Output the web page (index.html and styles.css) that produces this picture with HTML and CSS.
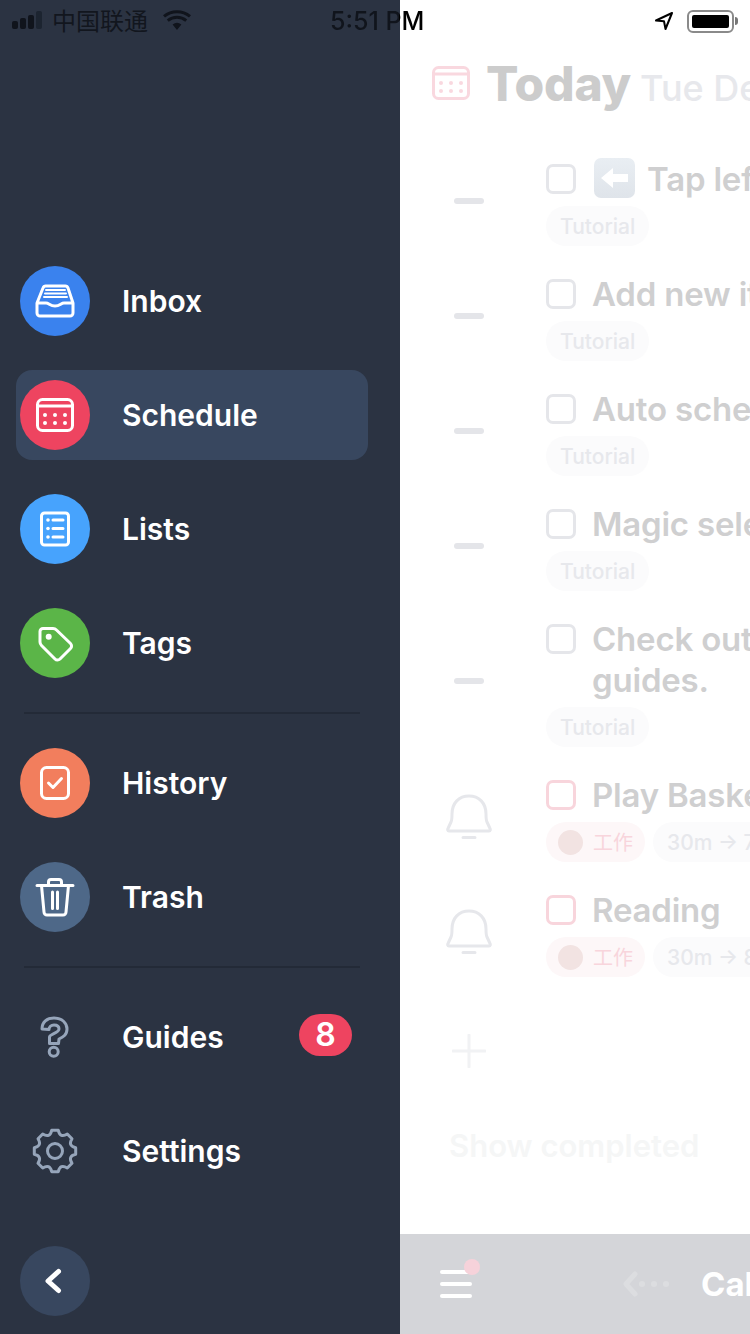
FILE: index.html
```html
<!DOCTYPE html>
<html>
<head>
<title>Schedule</title>
<meta charset="utf-8">
<link rel="stylesheet" href="styles.css">
</head>

<body>

    <div class="phone">

        <!-- status bar sits over both panels -->
        <div class="statusbar">
            <div class="signal"><i></i><i></i><i></i><i class="off"></i></div>
            <span class="carrier">中国联通</span>
            <svg class="wifi" width="28" height="20" viewBox="0 0 28 20"><path d="M14 20 9.6 14.6a7 7 0 0 1 8.8 0zM2 7.6 0 5.3a22 22 0 0 1 28 0L26 7.6a19 19 0 0 0-24 0zM5.700 11.700 3.800 9.500a16 16 0 0 1 20.400 0l-1.900 2.200a13 13 0 0 0-16.600 0z" fill="#10141c"/></svg>
            <span class="time">5:51 PM</span>
            <svg class="locate" width="20" height="20" viewBox="0 0 20 20"><path d="M18 2 2 9.500 10 10.300 11.500 18z" fill="none" stroke="#000" stroke-width="2" stroke-linejoin="round"/></svg>
            <div class="battery"><div class="charge"></div></div>
            <div class="nub"></div>
        </div>

        <div class="sidebar">
            <a class="item">
                <span class="circle blue">
                    <svg class="ico" viewBox="0 0 70 70"><path d="M17 37 23 22a3 3 0 0 1 3-2H45a3 3 0 0 1 3 2L53 37M17 37V47a3 3 0 0 0 3 3H50a3 3 0 0 0 3-3V37H44C41 37 40 40 35 40S29 37 26 37Z"/><path class="thin" d="M26 24H45M25 27.500H46M24 31H47"/></svg>
                </span>
                <span class="label">Inbox</span>
            </a>
            <a class="item active">
                <span class="circle red">
                    <svg class="ico" viewBox="0 0 70 70"><rect x="17.500" y="19.500" width="35" height="31" rx="5"/><path d="M17.500 26H52.500"/><g class="dots"><circle cx="25" cy="35" r="2"/><circle cx="35" cy="35" r="2"/><circle cx="45" cy="35" r="2"/><circle cx="25" cy="43" r="2"/><circle cx="35" cy="43" r="2"/><circle cx="45" cy="43" r="2"/></g></svg>
                </span>
                <span class="label">Schedule</span>
            </a>
            <a class="item">
                <span class="circle sky">
                    <svg class="ico" viewBox="0 0 70 70"><rect x="21.500" y="19" width="27" height="32" rx="3"/><path d="M33 26H43M33 34.500H43M33 43H43"/><g class="dots"><circle cx="28" cy="26" r="1.800"/><circle cx="28" cy="34.500" r="1.800"/><circle cx="28" cy="43" r="1.800"/></g></svg>
                </span>
                <span class="label">Lists</span>
            </a>
            <a class="item">
                <span class="circle green">
                    <svg class="ico" viewBox="0 0 70 70"><path d="M23 20.500H33A5 5 0 0 1 36.500 22L50.500 35.500A3.500 3.500 0 0 1 50.500 40.500L40 51A3.500 3.500 0 0 1 35 51L21.500 37.500A5 5 0 0 1 20 34V23.500A3 3 0 0 1 23 20.500Z"/><g class="dots"><circle cx="28.700" cy="28.700" r="3"/></g></svg>
                </span>
                <span class="label">Tags</span>
            </a>

            <div class="line"></div>

            <a class="item">
                <span class="circle orange">
                    <svg class="ico" viewBox="0 0 70 70"><rect x="21.500" y="19.500" width="27" height="31" rx="5"/><path d="M28.500 35 33 39.500 41.500 30.500"/></svg>
                </span>
                <span class="label">History</span>
            </a>
            <a class="item">
                <span class="circle slate">
                    <svg class="ico" viewBox="0 0 70 70"><path d="M17 23.500H53M21.500 23.500 24 50A3 3 0 0 0 27 53H43A3 3 0 0 0 46 50L48.500 23.500M28.500 23V20A2.500 2.500 0 0 1 31 17.500H39A2.500 2.500 0 0 1 41.500 20V23M32.500 30V46.500M37.500 30V46.500"/></svg>
                </span>
                <span class="label">Trash</span>
            </a>

            <div class="line"></div>

            <a class="item">
                <span class="circle">
                    <svg class="ico grey" viewBox="0 0 70 70"><path d="M22 27C22 20 27 16 34 16 42 16 47 21 47 27 47 33 43 35 39 37L38.500 41.500H29.500V35C30 32 39 31 39 27 39 24 37 23 34 23 31 23 29 25 29 27.500Z"/><circle cx="33.700" cy="49.700" r="4.500"/></svg>
                </span>
                <span class="label">Guides</span>
                <span class="badge">8</span>
            </a>
            <a class="item">
                <span class="circle">
                    <svg class="ico grey" viewBox="0 0 70 70"><path d="M31.700 14.300H38.300Q40.200 22.500 47.300 18L52 22.700Q47.500 29.800 55.700 31.700V38.300Q47.500 40.200 52 47.300L47.300 52Q40.200 47.500 38.300 55.700H31.700Q29.800 47.500 22.700 52L18 47.300Q22.500 40.200 14.300 38.300V31.700Q22.500 29.800 18 22.700L22.700 18Q29.800 22.500 31.700 14.300Z"/><circle cx="35" cy="35" r="7.500"/></svg>
                </span>
                <span class="label">Settings</span>
            </a>

            <div class="back">
                <svg width="70" height="70" viewBox="0 0 70 70"><path d="M38.500 25.500 28 35 38.500 44.500" fill="none" stroke="#fff" stroke-width="5" stroke-linecap="round" stroke-linejoin="round"/></svg>
            </div>
        </div>

        <div class="main">
            <div class="head">
                <svg class="headcal" width="38" height="34" viewBox="0 0 38 34"><rect x="1.500" y="1.500" width="35" height="31" rx="5"/><path d="M1.500 8H36.500"/><g><circle cx="9" cy="17" r="2"/><circle cx="19" cy="17" r="2"/><circle cx="29" cy="17" r="2"/><circle cx="9" cy="25" r="2"/><circle cx="19" cy="25" r="2"/><circle cx="29" cy="25" r="2"/></g></svg>
                <span class="today">Today</span>
                <span class="date">Tue Dec 11</span>
            </div>

            <div class="tasks">
                <div class="task">
                    <div class="side"><div class="dash"></div></div>
                    <div class="body">
                        <div class="title"><span class="check"></span><span class="arrowkey"><svg width="41" height="40" viewBox="0 0 41 40"><path d="M7 20 19 10V16H34V24H19V30Z" fill="#fff"/></svg></span>Tap left circle to schedule</div>
                        <div class="pills"><span class="pill">Tutorial</span></div>
                    </div>
                </div>
                <div class="task">
                    <div class="side"><div class="dash"></div></div>
                    <div class="body">
                        <div class="title"><span class="check"></span>Add new item here</div>
                        <div class="pills"><span class="pill">Tutorial</span></div>
                    </div>
                </div>
                <div class="task">
                    <div class="side"><div class="dash"></div></div>
                    <div class="body">
                        <div class="title"><span class="check"></span>Auto schedule</div>
                        <div class="pills"><span class="pill">Tutorial</span></div>
                    </div>
                </div>
                <div class="task">
                    <div class="side"><div class="dash"></div></div>
                    <div class="body">
                        <div class="title"><span class="check"></span>Magic select</div>
                        <div class="pills"><span class="pill">Tutorial</span></div>
                    </div>
                </div>
                <div class="task">
                    <div class="side"><div class="dash"></div></div>
                    <div class="body">
                        <div class="title"><span class="check"></span>Check out the<br>guides.</div>
                        <div class="pills"><span class="pill">Tutorial</span></div>
                    </div>
                </div>
                <div class="task">
                    <div class="side">
                        <svg class="bell" width="46" height="46" viewBox="0 0 46 46"><path d="M3 37H43C44.500 37 44.500 35.500 44 34.500L41 28C40 26 40 24 40 20 40 9 33 2 23 2S6 9 6 20C6 24 6 26 5 28L2 34.500C1.500 35.500 1.500 37 3 37ZM17 43.500H29"/></svg>
                    </div>
                    <div class="body">
                        <div class="title"><span class="check pink"></span>Play Basketball</div>
                        <div class="pills"><span class="pill work"><i class="swatch"></i><span class="worktext">工作</span></span><span class="pill">30m → 7:30 PM</span></div>
                    </div>
                </div>
                <div class="task">
                    <div class="side">
                        <svg class="bell" width="46" height="46" viewBox="0 0 46 46"><path d="M3 37H43C44.500 37 44.500 35.500 44 34.500L41 28C40 26 40 24 40 20 40 9 33 2 23 2S6 9 6 20C6 24 6 26 5 28L2 34.500C1.500 35.500 1.500 37 3 37ZM17 43.500H29"/></svg>
                    </div>
                    <div class="body">
                        <div class="title"><span class="check pink"></span>Reading</div>
                        <div class="pills"><span class="pill work"><i class="swatch"></i><span class="worktext">工作</span></span><span class="pill">30m → 8:30 PM</span></div>
                    </div>
                </div>
            </div>

            <div class="plus"><svg width="34" height="34" viewBox="0 0 34 34"><path d="M17 1V33M1 17H33" stroke="#f1f2f4" stroke-width="3" stroke-linecap="round"/></svg></div>
            <div class="completed">Show completed</div>

            <div class="bottombar">
                <div class="menu">
                    <i></i><i></i><i></i>
                    <span class="menudot"></span>
                </div>
                <div class="hint">
                    <svg width="48" height="26" viewBox="0 0 48 26"><path d="M12 3 3 13 12 23" fill="none" stroke="#dcdde0" stroke-width="5" stroke-linecap="round" stroke-linejoin="round"/><circle cx="19" cy="13" r="3" fill="#dcdde0"/><circle cx="31" cy="13" r="3" fill="#dcdde0"/><circle cx="43" cy="13" r="3" fill="#dcdde0"/></svg>
                </div>
                <span class="calendar">Calendar</span>
            </div>
        </div>
    </div>

</body>
</html>
```

FILE: styles.css
```css
html, body {
    margin: 0;
    padding: 0;
}

body {
    font-family: Inter, "Noto Sans CJK SC", sans-serif;
}

.phone {
    position: relative;
    display: flex;
    width: 750px;
    height: 1334px;
    overflow: hidden;
    background-color: white;
}

/* status bar */

.statusbar {
    position: absolute;
    top: 0;
    left: 0;
    right: 0;
    height: 42px;
    display: flex;
    align-items: center;
    padding-left: 12px;
}

.signal {
    flex: none;
    display: flex;
    align-items: flex-end;
    gap: 2px;
    width: 33px;
    height: 18px;
    margin-bottom: 2px;
}

.signal i {
    width: 6px;
    background-color: #10141c;
    border-radius: 2px;
}

.signal i:nth-child(1) { height: 8px; }
.signal i:nth-child(2) { height: 11px; }
.signal i:nth-child(3) { height: 14px; }
.signal i:nth-child(4) { height: 18px; }

.signal .off {
    background-color: #1c2430;
}

.carrier {
    flex: none;
    width: 96px;
    margin-left: 7px;
    margin-bottom: 4px;
    font-family: "Noto Sans CJK SC", sans-serif;
    font-size: 24px;
    color: #12161e;
}

.wifi {
    flex: none;
    margin-left: 15px;
    margin-bottom: 2px;
}

.time {
    flex: none;
    width: 96px;
    margin-left: 139px;
    font-size: 25px;
    font-weight: 500;
    background: linear-gradient(to right, #10141c 69px, #000 69px);
    -webkit-background-clip: text;
    background-clip: text;
    color: transparent;
}

.locate {
    flex: none;
    margin-left: 228px;
}

.battery {
    flex: none;
    box-sizing: border-box;
    width: 47px;
    height: 23px;
    margin-left: 13px;
    padding: 3px;
    border: 2px solid #8a8a8a;
    border-radius: 6px;
}

.charge {
    height: 100%;
    background-color: black;
    border-radius: 2px;
}

.nub {
    flex: none;
    width: 3px;
    height: 8px;
    margin-left: 1px;
    background-color: #777;
    border-radius: 0 3px 3px 0;
}

/* left menu */

.sidebar {
    box-sizing: border-box;
    flex: none;
    display: flex;
    flex-direction: column;
    gap: 24px;
    width: 400px;
    padding-top: 256px;
    padding-bottom: 18px;
    background-color: #2b3342;
}

.item {
    display: flex;
    align-items: center;
    gap: 32px;
    height: 90px;
    margin: 0 32px 0 16px;
    padding: 0 16px 0 4px;
    border-radius: 16px;
}

.item.active {
    background-color: #38475f;
}

.circle {
    flex: none;
    width: 70px;
    height: 70px;
    border-radius: 50%;
}

.blue { background-color: #3a82ee; }
.red { background-color: #ee4460; }
.sky { background-color: #47a3fd; }
.green { background-color: #5bb548; }
.orange { background-color: #f27e5d; }
.slate { background-color: #4e6888; }

.ico {
    display: block;
    width: 70px;
    height: 70px;
    fill: none;
    stroke: white;
    stroke-width: 3;
    stroke-linecap: round;
    stroke-linejoin: round;
}

.ico .thin {
    stroke-width: 2;
}

.ico .dots {
    fill: white;
    stroke: none;
}

.ico.grey {
    stroke: #96a5ba;
}

.label {
    flex: 1;
    font-size: 30px;
    font-weight: 600;
    color: white;
}

.badge {
    width: 53px;
    height: 42px;
    margin-bottom: 4px;
    border-radius: 21px;
    background-color: #ee4460;
    color: white;
    font-size: 32px;
    font-weight: 600;
    line-height: 42px;
    text-align: center;
}

.line {
    height: 2px;
    margin: 0 40px 0 24px;
    background-color: #232a37;
}

.back {
    width: 70px;
    height: 70px;
    margin-top: auto;
    margin-left: 20px;
    border-radius: 50%;
    background-color: #38475f;
}

/* right panel, faded */

.main {
    position: relative;
    flex: 1;
    min-width: 0;
    display: flex;
    flex-direction: column;
    overflow: hidden;
    white-space: nowrap;
}

.head {
    display: flex;
    align-items: baseline;
    height: 60px;
    margin-top: 54px;
    padding-left: 32px;
}

.headcal {
    flex: none;
    align-self: center;
    margin-right: 16px;
    margin-bottom: 2px;
    fill: none;
    stroke: #f9d8df;
    stroke-width: 3;
}

.headcal g {
    fill: #f9d8df;
    stroke: none;
}

.today {
    flex: none;
    font-size: 48px;
    font-weight: 800;
    letter-spacing: -0.2px;
    color: #cccccc;
}

.date {
    flex: none;
    margin-left: 9px;
    font-size: 36px;
    font-weight: 500;
    color: #e7e8ec;
}

.tasks {
    margin-top: 45px;
}

.task {
    display: flex;
    margin-bottom: 28px;
}

.side {
    flex: none;
    display: flex;
    align-items: center;
    justify-content: center;
    width: 138px;
    margin-right: 8px;
    padding-bottom: 4px;
}

.dash {
    width: 30px;
    height: 6px;
    border-radius: 3px;
    background-color: #e4e5e9;
}

.bell {
    fill: none;
    stroke: #e6e7eb;
    stroke-width: 3;
    stroke-linecap: round;
    stroke-linejoin: round;
}

.title {
    padding-left: 46px;
    position: relative;
    font-size: 33px;
    font-weight: 600;
    letter-spacing: -0.2px;
    line-height: 41px;
    color: #cfcfd0;
}

.check {
    position: absolute;
    left: 0;
    top: 5px;
    box-sizing: border-box;
    width: 30px;
    height: 30px;
    border: 3px solid #e5e6ea;
    border-radius: 7px;
}

.check.pink {
    border-color: #f8d5dc;
}

.arrowkey {
    display: inline-block;
    width: 41px;
    height: 40px;
    margin-top: -1px;
    margin-left: 2px;
    margin-right: 12px;
    vertical-align: top;
    border-radius: 7px;
    background: linear-gradient(#e9eef3, #dfe4ea);
}

.arrowkey svg {
    display: block;
}

.pills {
    display: flex;
    gap: 8px;
    margin-top: 6px;
}

.pill {
    flex: none;
    display: flex;
    align-items: center;
    height: 40px;
    padding: 0 14px;
    border-radius: 20px;
    background-color: #fbfbfc;
    font-size: 21px;
    font-weight: 500;
    color: #e7e8ec;
}

.pill.work {
    padding: 0 12px;
    background-color: #fdf7f8;
    color: #f8d5dc;
    font-family: "Noto Sans CJK SC", sans-serif;
    font-size: 20px;
    font-weight: 400;
}

.worktext {
    margin-bottom: 2px;
}

.swatch {
    width: 25px;
    height: 25px;
    margin-right: 10px;
    border-radius: 50%;
    background-color: #f2e3e2;
}

.plus {
    display: flex;
    height: 34px;
    margin-top: 29px;
    padding-left: 52px;
}

.completed {
    margin-top: 59px;
    padding-left: 49px;
    font-size: 31px;
    font-weight: 600;
    color: #f5f6f6;
}

.bottombar {
    position: absolute;
    left: 0;
    right: 0;
    bottom: 0;
    height: 100px;
    display: flex;
    align-items: center;
    background-color: #d4d5d9;
}

.menu {
    flex: none;
    position: relative;
    display: flex;
    flex-direction: column;
    gap: 8px;
    width: 32px;
    margin-left: 40px;
}

.menu i {
    height: 4px;
    border-radius: 2px;
    background-color: white;
}

.menudot {
    position: absolute;
    top: -11px;
    right: -8px;
    width: 16px;
    height: 16px;
    border-radius: 50%;
    background-color: #f6d2da;
}

.hint {
    flex: none;
    display: flex;
    margin-left: 151px;
}

.calendar {
    flex: none;
    margin-left: 30px;
    font-size: 33px;
    font-weight: 700;
    color: white;
}
```
